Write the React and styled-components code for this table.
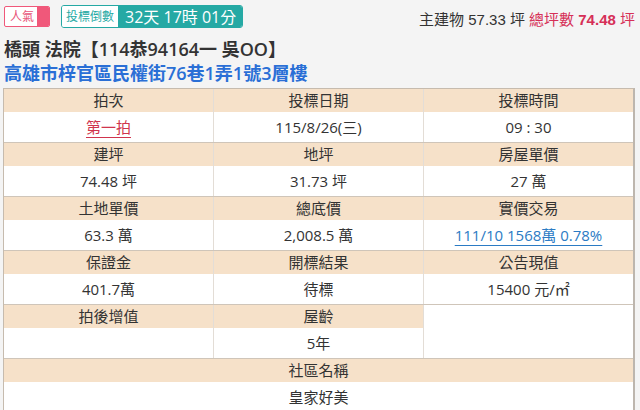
import React from 'react';
import styled, { createGlobalStyle } from 'styled-components';

const GlobalStyle = createGlobalStyle`
    body {
        margin: 0;
        background: #f4f4f4;
        font-family: "Open Sans", "Noto Sans CJK TC", sans-serif;
        color: #333;
    }
`;

const rows = [
    [
        { label: '拍次', value: '第一拍', kind: 'red' },
        { label: '投標日期', value: '115/8/26(三)' },
        { label: '投標時間', value: '09 : 30' },
    ],
    [
        { label: '建坪', value: '74.48 坪' },
        { label: '地坪', value: '31.73 坪' },
        { label: '房屋單價', value: '27 萬' },
    ],
    [
        { label: '土地單價', value: '63.3 萬' },
        { label: '總底價', value: '2,008.5 萬' },
        { label: '實價交易', value: '111/10 1568萬 0.78%', kind: 'blue' },
    ],
    [
        { label: '保證金', value: '401.7萬' },
        { label: '開標結果', value: '待標' },
        { label: '公告現值', value: '15400 元/㎡' },
    ],
    [
        { label: '拍後增值', value: '' },
        { label: '屋齡', value: '5年' },
        null,
    ],
];

function App() {
    return (
        <Page>
            <GlobalStyle />
            <TopBar>
                <HotBadge>人氣<HotMark /></HotBadge>
                <Countdown>
                    <CountLabel>投標倒數</CountLabel>
                    <CountValue>32天 17時 01分</CountValue>
                </Countdown>
                <Area>
                    主建物 57.33 坪 <Total>總坪數 <b>74.48</b> 坪</Total>
                </Area>
            </TopBar>
            <Title>橋頭 法院【114恭94164一 吳OO】</Title>
            <Address>高雄市梓官區民權街76巷1弄1號3層樓</Address>
            <Table>
                {rows.map((row, i) => (
                    <Row key={i}>
                        {row.map((cell, j) => cell ? (
                            <Cell key={j}>
                                <Head>{cell.label}</Head>
                                <Value>
                                    {cell.kind ? <LinkText kind={cell.kind}>{cell.value}</LinkText> : cell.value}
                                </Value>
                            </Cell>
                        ) : <Cell key={j} />)}
                    </Row>
                ))}
                <Row>
                    <Cell span={3}>
                        <Head>社區名稱</Head>
                        <Value>皇家好美</Value>
                    </Cell>
                </Row>
            </Table>
        </Page>
    );
}

const Page = styled.div`
    padding: 5px 5px 0 3px;
    height: 405px;
    overflow: hidden;
`;

const TopBar = styled.div`
    display: flex;
    align-items: center;
    height: 22px;
    padding-left: 1px;
`;

const HotBadge = styled.div`
    display: flex;
    align-items: center;
    height: 19px;
    border: 1px solid #f0587a;
    border-radius: 2px;
    background: #fff;
    color: #e8557a;
    font-size: 12px;
    padding-left: 5px;
    overflow: hidden;
`;

const HotMark = styled.span`
    width: 12px;
    height: 100%;
    margin-left: 3px;
    background: #f0587a;
`;

const Countdown = styled.div`
    display: flex;
    height: 21px;
    margin-left: 11px;
    border: 1px solid #25a9a4;
    border-radius: 3px;
    overflow: hidden;
`;

const CountLabel = styled.span`
    display: flex;
    align-items: center;
    padding: 0 4px;
    background: #fff;
    color: #25a9a4;
    font-size: 12px;
`;

const CountValue = styled.span`
    display: flex;
    align-items: center;
    width: 124px;
    padding-left: 7px;
    box-sizing: border-box;
    background: #25a9a4;
    color: #fff;
    font-size: 16px;
`;

const Area = styled.div`
    margin-left: auto;
    margin-top: 4px;
    font-family: "Liberation Sans", "Noto Sans CJK TC", sans-serif;
    font-size: 15px;
    color: #333;
    white-space: nowrap;
`;

const Total = styled.span`
    color: #d62f57;
    b { font-weight: 700; }
`;

const Title = styled.div`
    margin-top: 10px;
    padding-left: 1px;
    font-size: 18px;
    line-height: 24px;
    font-weight: 600;
    color: #333;
`;

const Address = styled.div`
    padding-left: 1px;
    font-size: 18px;
    line-height: 24px;
    font-weight: 600;
    color: #2a6fd6;
`;

const Table = styled.div`
    margin-top: 3px;
    width: 632px;
    box-sizing: border-box;
    border: 1px solid #c6bbae;
    border-right: 2px solid #bdb6ae;
    border-bottom: none;
    background: #fff;
`;

const Row = styled.div`
    display: grid;
    grid-template-columns: 210px 210px 1fr;
    border-bottom: 1px solid #cfc5b9;
`;

const Cell = styled.div`
    grid-column: span ${props => props.span || 1};
    text-align: center;
    border-right: 1px solid #e3ddd6;

    &:last-child {
        border-right: none;
    }
`;

const Head = styled.div`
    height: 23px;
    line-height: 23px;
    background: #f6e1c9;
    font-size: 15px;
    color: #333;
`;

const Value = styled.div`
    height: 30px;
    line-height: 30px;
    font-size: 15px;
    color: #333;
`;

const LinkText = styled.span`
    color: ${props => props.kind === 'red' ? '#d0344d' : '#2b7bc4'};
    text-decoration: underline;
    text-underline-offset: 4px;
    text-decoration-thickness: 1px;
`;

export default App;
